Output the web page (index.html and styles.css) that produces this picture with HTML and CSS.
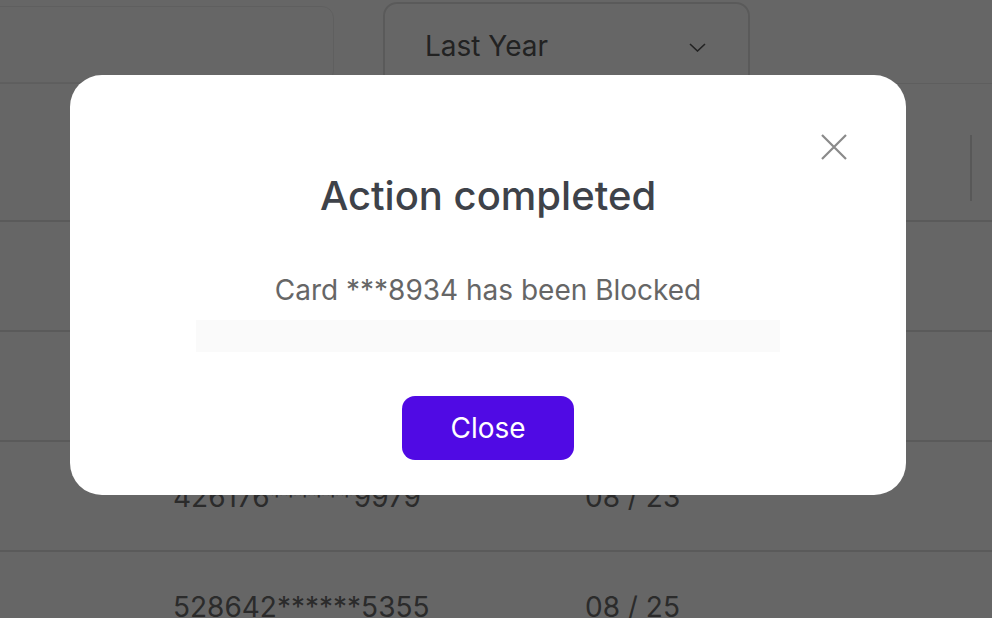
FILE: index.html
```html
<!DOCTYPE html>
<html lang="en">
<head>
  <meta charset="UTF-8" />
  <meta name="viewport" content="width=device-width, initial-scale=1.0" />
  <title>Cards</title>
  <link rel="stylesheet" href="styles.css">
</head>
<body>
  <div class="page">
    <div class="toolbar">
      <div class="search"></div>
      <div class="select">
        <span>Last Year</span>
        <svg width="17" height="9" viewBox="0 0 17 9"><path d="M1 1l7.5 7 7.5-7" fill="none" stroke="#555" stroke-width="1.6"/></svg>
      </div>
    </div>
    <div class="table">
      <div class="row head"><span class="divider"></span></div>
      <div class="row"></div>
      <div class="row"></div>
      <div class="row"><span class="num">426176******9979</span><span class="exp">08 / 23</span></div>
      <div class="row"><span class="num">528642******5355</span><span class="exp">08 / 25</span></div>
    </div>
  </div>

  <div class="overlay">
    <div class="modal">
      <button class="close-x" aria-label="Close">
        <svg width="26" height="26" viewBox="0 0 26 26"><path d="M1 1l24 24M25 1L1 25" stroke="#8a8a8a" stroke-width="2.2"/></svg>
      </button>
      <h2>Action completed</h2>
      <p class="msg">Card ***8934 has been Blocked</p>
      <div class="note"></div>
      <button class="btn">Close</button>
    </div>
  </div>
</body>
</html>
```

FILE: styles.css
```css
body {
  margin: 0;
  font-family: 'Inter', 'Noto Sans', sans-serif;
  background: #fff;
  overflow: hidden;
}
.page {
  width: 992px;
  height: 618px;
  overflow: hidden;
}
.toolbar {
  display: flex;
  gap: 49px;
  height: 84px;
  border-bottom: 1px solid #ececec;
  box-sizing: border-box;
}
.search {
  width: 346px;
  height: 77px;
  margin-top: 6px;
  margin-left: -12px;
  border: 1px solid #eee;
  border-radius: 12px;
  box-sizing: border-box;
}
.select {
  width: 367px;
  height: 120px;
  margin-top: 2px;
  border: 2px solid #e2e2e2;
  border-radius: 14px;
  box-sizing: border-box;
  display: flex;
  align-items: flex-start;
  justify-content: space-between;
  padding: 25px 42px 0 40px;
  font-size: 28px;
  color: #555;
}
.select svg {
  margin-top: 14px;
}
.table {
  display: flex;
  flex-direction: column;
}
.row {
  height: 110px;
  box-sizing: border-box;
  border-bottom: 2px solid #e0e0e0;
  display: flex;
  align-items: center;
  padding-top: 2px;
  font-size: 28px;
  color: #6b6b6b;
  position: relative;
}
.row.head {
  height: 138px;
}
.divider {
  position: absolute;
  left: 970px;
  top: 51px;
  width: 2px;
  height: 66px;
  background: #dcdcdc;
}
.num {
  margin-left: 173px;
  width: 412px;
}
.overlay {
  position: fixed;
  inset: 0;
  background: rgba(0, 0, 0, 0.6);
}
.modal {
  position: absolute;
  left: 70px;
  top: 75px;
  width: 836px;
  height: 420px;
  box-sizing: border-box;
  background: #fff;
  border-radius: 32px;
  padding-top: 97px;
  display: flex;
  flex-direction: column;
  align-items: center;
}
.close-x {
  position: absolute;
  top: 59px;
  right: 59px;
  padding: 0;
  border: none;
  background: none;
  width: 26px;
  height: 26px;
  cursor: pointer;
}
h2 {
  margin: 0;
  font-size: 40px;
  line-height: 48px;
  font-weight: 500;
  color: #3e4249;
}
.msg {
  margin: 54px 0 0;
  font-size: 28px;
  line-height: 32px;
  color: #666;
}
.note {
  width: 584px;
  height: 32px;
  margin-top: 14px;
  background: #fafafa;
}
.btn {
  margin-top: 44px;
  width: 172px;
  height: 64px;
  border: none;
  border-radius: 13px;
  background: #500ae4;
  color: #fff;
  font-family: 'Inter', sans-serif;
  font-size: 28px;
  cursor: pointer;
}
```
